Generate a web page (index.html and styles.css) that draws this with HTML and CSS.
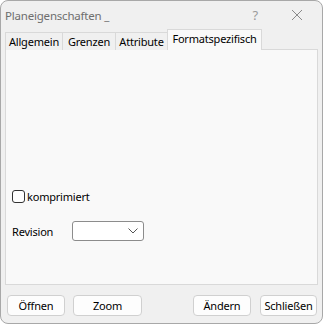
FILE: index.html
```html
<!DOCTYPE html>
<html lang="de">
<head>
    <meta charset="UTF-8">
    <title>Planeigenschaften</title>
    <link rel="stylesheet" href="styles.css">
</head>
<body>
    <div class="window">
        <div class="titlebar">
            <span class="title">Planeigenschaften _</span>
            <span class="help">?</span>
            <svg class="close" width="12" height="12" viewBox="0 0 12 12">
                <path d="M1 1 L11 11 M11 1 L1 11" stroke="#8a8a8a" stroke-width="1" fill="none"/>
            </svg>
        </div>
        <div class="tabs">
            <div class="tab tab-allgemein">Allgemein</div>
            <div class="tab tab-grenzen">Grenzen</div>
            <div class="tab tab-attribute">Attribute</div>
            <div class="tab tab-format active">Formatspezifisch</div>
        </div>
        <div class="panel">
            <label class="check-row">
                <span class="checkbox"></span>
                <span>komprimiert</span>
            </label>
            <div class="field-row">
                <span class="field-label">Revision</span>
                <div class="combo">
                    <svg width="10" height="6" viewBox="0 0 10 6">
                        <path d="M0.5 0.5 L5 5 L9.5 0.5" stroke="#555" stroke-width="1" fill="none"/>
                    </svg>
                </div>
            </div>
        </div>
        <div class="footer">
            <button class="btn btn-open">Öffnen</button>
            <button class="btn btn-zoom">Zoom</button>
            <span class="spacer"></span>
            <button class="btn btn-change">Ändern</button>
            <button class="btn btn-close">Schließen</button>
        </div>
    </div>
</body>
</html>
```

FILE: styles.css
```css
* {
    margin: 0;
    padding: 0;
    box-sizing: border-box;
}

body {
    background: #ffffff;
    font-family: "Noto Sans", sans-serif;
    font-size: 11px;
    letter-spacing: -0.2px;
    color: #000;
}

.window {
    width: 323px;
    height: 324px;
    background: #f0f0f0;
    border: 1px solid #a8a8a8;
    border-radius: 8px;
    display: flex;
    flex-direction: column;
    overflow: hidden;
}

.titlebar {
    height: 28px;
    display: flex;
    align-items: center;
    padding-left: 4px;
}

.title {
    flex: 1;
    color: #6e6e6e;
    font-size: 11.5px;
}

.help {
    color: #9a9a9a;
    font-size: 13px;
    margin-right: 33px;
}

.close {
    margin-right: 19px;
}

.tabs {
    display: flex;
    align-items: flex-end;
    height: 20px;
    padding-left: 4px;
    position: relative;
    z-index: 1;
}

.tab {
    height: 18px;
    line-height: 17px;
    text-align: center;
    background: #f0f0f0;
    border: 1px solid #d9d9d9;
    border-bottom: none;
    border-right: none;
    margin-bottom: -1px;
}

.tab-allgemein { width: 57px; }
.tab-grenzen { width: 53px; }
.tab-attribute { width: 52px; }

.tab.active {
    width: 95px;
    height: 21px;
    line-height: 18px;
    background: #f9f9f9;
    border-right: 1px solid #d9d9d9;
}

.panel {
    height: 236px;
    margin: 0 4px;
    background: #f9f9f9;
    border: 1px solid #d9d9d9;
    padding: 138px 6px 0 6px;
}

.check-row {
    display: flex;
    align-items: center;
    gap: 2px;
    height: 16px;
}

.checkbox {
    width: 13px;
    height: 13px;
    border: 1px solid #333;
    border-radius: 3px;
    background: #fff;
}

.field-row {
    display: flex;
    align-items: center;
    margin-top: 17px;
}

.field-label {
    width: 60px;
}

.combo {
    width: 72px;
    height: 20px;
    border: 1px solid #8c8c8c;
    border-radius: 3px;
    background: #fff;
    display: flex;
    align-items: center;
    justify-content: flex-end;
    padding-right: 5px;
}

.footer {
    display: flex;
    align-items: center;
    padding: 10px 5px 0 6px;
}

.btn {
    height: 21px;
    font-family: inherit;
    font-size: 11px;
    letter-spacing: -0.2px;
    background: #fdfdfd;
    border: 1px solid #d0d0d0;
    border-radius: 4px;
    color: #000;
}

.btn-open { width: 58px; }
.btn-zoom { width: 69px; margin-left: 8px; }
.spacer { flex: 1; }
.btn-change { width: 58px; }
.btn-close { width: 57px; margin-left: 9px; }
```
